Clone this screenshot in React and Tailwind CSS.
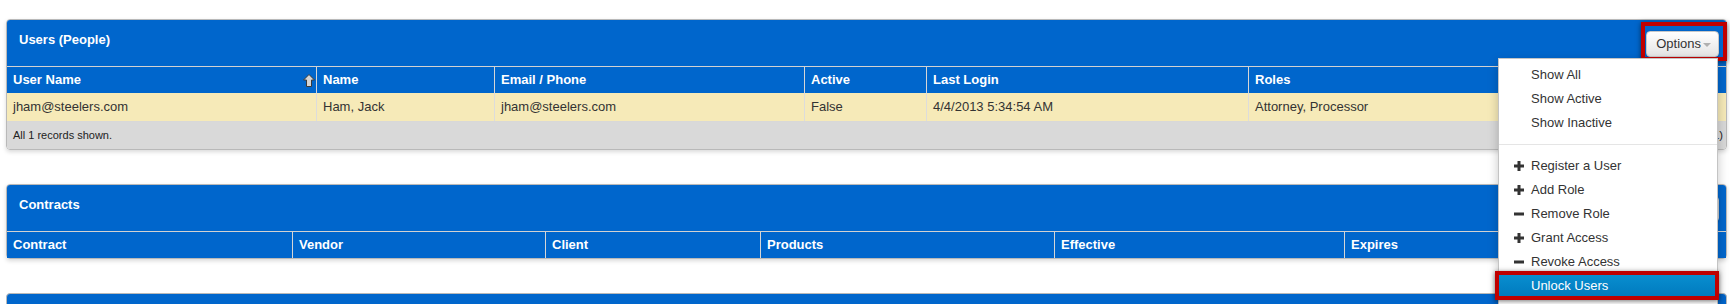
import React from "react";

// Users / Contracts admin grids with the Options dropdown opened
const userCols = [
  { label: "User Name", w: "w-[310px]", sort: true },
  { label: "Name", w: "w-[178px]" },
  { label: "Email / Phone", w: "w-[310px]" },
  { label: "Active", w: "w-[122px]" },
  { label: "Last Login", w: "w-[322px]" },
  { label: "Roles", w: "flex-1", last: true },
];

const userRow = ["jham@steelers.com", "Ham, Jack", "jham@steelers.com", "False", "4/4/2013 5:34:54 AM", "Attorney, Processor"];

const contractCols = [
  { label: "Contract", w: "w-[286px]" },
  { label: "Vendor", w: "w-[253px]" },
  { label: "Client", w: "w-[215px]" },
  { label: "Products", w: "w-[294px]" },
  { label: "Effective", w: "w-[290px]" },
  { label: "Expires", w: "flex-1", last: true },
];

const menuTop = ["Show All", "Show Active", "Show Inactive"];
const menuBottom = [
  { label: "Register a User", icon: "plus" },
  { label: "Add Role", icon: "plus" },
  { label: "Remove Role", icon: "minus" },
  { label: "Grant Access", icon: "plus" },
  { label: "Revoke Access", icon: "minus" },
  { label: "Unlock Users", active: true },
  { label: "Send Password Reset" },
];

function SortArrow() {
  return (
    <svg width="12" height="13" viewBox="0 0 12 13" className="absolute right-[1px] top-[7px]">
      <polygon points="6,0.5 11.5,6 8.5,6 8.5,12.5 3.5,12.5 3.5,6 0.5,6" fill="#d4d4d4" stroke="#3a3a3a" strokeWidth="1" />
    </svg>
  );
}

function OptionsButton({ marked }) {
  return (
    <div className="relative mt-[11px] mr-[7px]">
      <div className="h-[26px] pl-[9px] pr-[7px] flex items-center rounded-[4px] border border-[#c8c8c8] bg-linear-to-b from-white to-[#e4e4e4] text-[13px] text-[#333] shadow-[0_1px_2px_rgba(0,0,0,0.25)]">
        Options
        <span className="ml-[2px] mt-[1px] w-0 h-0 border-x-[4px] border-t-[4px] border-x-transparent border-t-[#b0b0b0]" />
      </div>
      {marked && (
        <div className="absolute -left-[5px] -top-[9px] -right-[8px] -bottom-[4px] border-[4px] border-[#c00000] shadow-[0_1px_5px_rgba(0,0,0,0.55)]" />
      )}
    </div>
  );
}

function Panel({ title, cols, children, marked }) {
  return (
    <div className="ml-[6px] mr-[3px] rounded-[4px] border border-[#b9b9b9] shadow-[0_2px_4px_rgba(0,0,0,0.15)]">
      <div className="h-[46px] bg-[#0066cc] rounded-t-[3px] flex justify-between items-start">
        <div className="pl-[12px] pt-[12px] leading-[16px] text-[13px] font-bold text-white">{title}</div>
        <OptionsButton marked={marked} />
      </div>
      <div className="h-[1px] bg-[#d2d2d2]" />
      <div className="flex h-[26px] bg-[#0066cc]">
        {cols.map((c) => (
          <div
            key={c.label}
            className={`${c.w} relative flex items-center pl-[6px] text-[13px] font-bold text-white ${c.last ? "" : "border-r border-[#d6d6d6]"}`}
          >
            {c.label}
            {c.sort && <SortArrow />}
          </div>
        ))}
      </div>
      {children}
    </div>
  );
}

function PlusIcon() {
  return (
    <svg width="10" height="10" viewBox="0 0 10 10">
      <rect x="3.5" y="0" width="3" height="10" fill="#333" />
      <rect x="0" y="3.5" width="10" height="3" fill="#333" />
    </svg>
  );
}

function MinusIcon() {
  return (
    <svg width="10" height="10" viewBox="0 0 10 10">
      <rect x="0" y="3.5" width="10" height="3" fill="#333" />
    </svg>
  );
}

function Menu() {
  return (
    <div className="absolute left-[1498px] top-[58px] w-[220px] z-20 bg-white border border-[#c4c4c4] shadow-[0_4px_10px_rgba(0,0,0,0.22)] pt-[4px] pb-[5px] text-[13px] text-[#333]">
      {menuTop.map((m) => (
        <div key={m} className="h-[24px] flex items-center pl-[32px]">{m}</div>
      ))}
      <div className="h-[1px] bg-[#e5e5e5] my-[9px]" />
      {menuBottom.map((m) => (
        <div
          key={m.label}
          className={`relative h-[24px] flex items-center ${m.active ? "bg-linear-to-b from-[#0a8fd0] to-[#0079bd] text-white" : ""}`}
        >
          <span className="w-[32px] pl-[15px] flex items-center">
            {m.icon === "plus" && <PlusIcon />}
            {m.icon === "minus" && <MinusIcon />}
          </span>
          {m.label}
          {m.active && (
            <div className="absolute -left-[4px] -right-[2px] -top-[3px] -bottom-[2px] border-[4px] border-[#c00000] shadow-[0_1px_5px_rgba(0,0,0,0.55)]" />
          )}
        </div>
      ))}
    </div>
  );
}

export default function App() {
  return (
    <div className="relative w-[1730px] h-[304px] overflow-hidden bg-white pt-[19px] font-['Liberation_Sans',Arial,sans-serif]">
      <Panel title="Users (People)" cols={userCols} marked>
        <div className="flex h-[29px] bg-[#f6eab8] text-[13px] text-[#333] border-b border-[#d8d8d8]">
          {userCols.map((c, i) => (
            <div key={c.label} className={`${c.w} flex items-center pl-[6px] ${c.last ? "" : "border-r border-[#dcdcdc]"}`}>
              {userRow[i]}
            </div>
          ))}
        </div>
        <div className="h-[27px] bg-[#d9d9d9] rounded-b-[3px] flex items-center justify-between pl-[6px] pr-[3px] text-[11px] text-[#222]">
          <span>All 1 records shown.</span>
          <span>Page 1 of 1 (1)</span>
        </div>
      </Panel>

      <div className="h-[34px]" />

      <Panel title="Contracts" cols={contractCols} />

      <div className="h-[34px]" />

      <div className="ml-[6px] mr-[3px] rounded-t-[4px] border border-[#b9b9b9] h-[60px] bg-[#0066cc]" />

      <Menu />
    </div>
  );
}
